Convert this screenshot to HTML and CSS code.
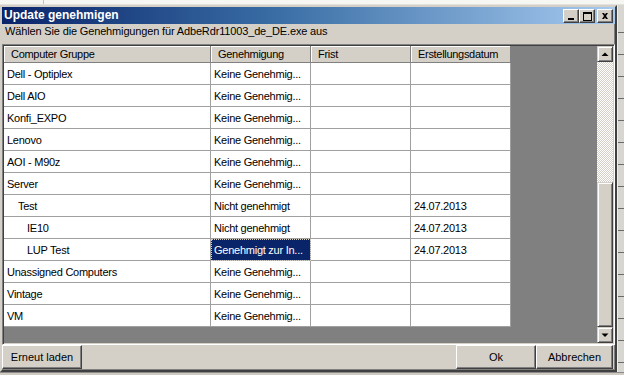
FILE: index.html
```html
<!DOCTYPE html>
<html lang="de">
<head>
<meta charset="utf-8">
<title>Update genehmigen</title>
<link rel="stylesheet" href="styles.css">
</head>
<body>
<div class="screen">
  <div class="topstrip"><span class="tick"></span></div>
  <div class="main">
    <div class="window">
      <div class="titlebar">
        <span class="title">Update genehmigen</span>
        <div class="tbtns">
          <span class="tbtn"><svg width="14" height="12" viewBox="0 0 14 12"><rect x="4" y="8" width="6" height="2" fill="#000"/></svg></span>
          <span class="tbtn gap"><svg width="14" height="12" viewBox="0 0 14 12"><path d="M3 2h9v9H3z M4 4v6h7V4z" fill="#000" fill-rule="evenodd"/></svg></span>
          <span class="tbtn"><svg width="14" height="12" viewBox="0 0 14 12"><path d="M4 3h2l1 1.5L8 3h2L8 6l2 3H8L7 7.5 6 9H4l2-3z" fill="#000"/></svg></span>
        </div>
      </div>
      <div class="subtitle">Wählen Sie die Genehmigungen für AdbeRdr11003_de_DE.exe aus</div>
      <div class="listbox">
        <div class="gridarea">
          <div class="row head">
            <div class="c c1 h">Computer Gruppe</div>
            <div class="c c2 h">Genehmigung</div>
            <div class="c c3 h">Frist</div>
            <div class="c c4 h">Erstellungsdatum</div>
          </div>
          <div class="row"><div class="c c1">Dell - Optiplex</div><div class="c c2">Keine Genehmig...</div><div class="c c3"></div><div class="c c4"></div></div>
          <div class="row"><div class="c c1">Dell AIO</div><div class="c c2">Keine Genehmig...</div><div class="c c3"></div><div class="c c4"></div></div>
          <div class="row"><div class="c c1">Konfi_EXPO</div><div class="c c2">Keine Genehmig...</div><div class="c c3"></div><div class="c c4"></div></div>
          <div class="row"><div class="c c1">Lenovo</div><div class="c c2">Keine Genehmig...</div><div class="c c3"></div><div class="c c4"></div></div>
          <div class="row"><div class="c c1">AOI - M90z</div><div class="c c2">Keine Genehmig...</div><div class="c c3"></div><div class="c c4"></div></div>
          <div class="row"><div class="c c1">Server</div><div class="c c2">Keine Genehmig...</div><div class="c c3"></div><div class="c c4"></div></div>
          <div class="row"><div class="c c1 l1">Test</div><div class="c c2">Nicht genehmigt</div><div class="c c3"></div><div class="c c4">24.07.2013</div></div>
          <div class="row"><div class="c c1 l2">IE10</div><div class="c c2">Nicht genehmigt</div><div class="c c3"></div><div class="c c4">24.07.2013</div></div>
          <div class="row"><div class="c c1 l2">LUP Test</div><div class="c c2 sel">Genehmigt zur In...</div><div class="c c3"></div><div class="c c4">24.07.2013</div></div>
          <div class="row"><div class="c c1">Unassigned Computers</div><div class="c c2">Keine Genehmig...</div><div class="c c3"></div><div class="c c4"></div></div>
          <div class="row"><div class="c c1">Vintage</div><div class="c c2">Keine Genehmig...</div><div class="c c3"></div><div class="c c4"></div></div>
          <div class="row"><div class="c c1">VM</div><div class="c c2">Keine Genehmig...</div><div class="c c3"></div><div class="c c4"></div></div>
        </div>
        <div class="vscroll">
          <span class="sbtn"><svg width="14" height="14" viewBox="0 0 14 14"><path d="M3.5 9h7L7 5.5z" fill="#000"/></svg></span>
          <span class="track"></span>
          <span class="thumb"></span>
          <span class="sbtn"><svg width="14" height="14" viewBox="0 0 14 14"><path d="M3.5 5.5h7L7 9z" fill="#000"/></svg></span>
        </div>
      </div>
      <div class="buttons">
        <span class="btn reload">Erneut laden</span>
        <div class="rightbtns">
          <span class="btn ok">Ok</span>
          <span class="btn cancel">Abbrechen</span>
        </div>
      </div>
    </div>
    <div class="behind"></div>
  </div>
  <div class="bottomstrip"></div>
</div>
</body>
</html>
```
FILE: styles.css
```css
* { box-sizing: border-box; }
html, body { margin: 0; padding: 0; }
body {
  width: 624px;
  height: 375px;
  overflow: hidden;
  background: #d4d0c8;
  font-family: "Liberation Sans", Arial, sans-serif;
  font-size: 11px;
  color: #000;
}
.screen { display: flex; flex-direction: column; width: 624px; height: 375px; }
.topstrip {
  height: 5px;
  flex: none;
  background: #f6f6f2;
  border-bottom: 1px solid #e4e2dc;
  display: flex;
  padding-left: 43px;
}
.tick { width: 1px; height: 4px; background: #d6c58a; }
.main { display: flex; height: 367px; flex: none; }
.window {
  width: 617px;
  height: 367px;
  background: #d4d0c8;
  border: 2px solid;
  border-color: #d4d0c8 #404040 #404040 #d4d0c8;
  box-shadow: inset -1px -1px #808080;
  display: flex;
  flex-direction: column;
}
.titlebar {
  height: 17px;
  flex: none;
  background: linear-gradient(to right, #0a246a 0%, #3a6ea5 45%, #a6caf0 100%);
  display: flex;
  align-items: center;
  justify-content: space-between;
  padding: 0 2px 0 2px;
}
.title { color: #fff; font-weight: bold; font-size: 12px; line-height: 17px; }
.tbtns { display: flex; align-items: center; }
.tbtn {
  width: 16px; height: 14px;
  background: #d4d0c8;
  border: 1px solid;
  border-color: #fff #404040 #404040 #fff;
  box-shadow: inset -1px -1px #808080;
  display: flex; align-items: center; justify-content: center;
}
.tbtn svg { display: block; }
.tbtn.gap { margin-right: 2px; }
.subtitle {
  height: 20px; flex: none;
  line-height: 15px;
  padding-left: 3px;
  white-space: nowrap;
  letter-spacing: -0.15px;
}
.listbox {
  height: 301px;
  flex: none;
  display: flex;
  border: 1px solid;
  border-color: #808080 #fff #fff #808080;
  box-shadow: inset 1px 1px #404040, inset -1px -1px #d4d0c8;
  padding: 1px;
}
.gridarea { flex: 1; background: #808080; display: flex; flex-direction: column; }
.row { display: flex; height: 22px; flex: none; }
.row.head { height: 17px; }
.c {
  background: #fff;
  border-right: 1px solid #a0a0a0;
  border-bottom: 1px solid #a0a0a0;
  padding: 1px 0 0 3px;
  line-height: 20px;
  white-space: nowrap;
  overflow: hidden;
  letter-spacing: -0.25px;
}
.c1 { width: 207px; }
.c2 { width: 100px; }
.c3 { width: 100px; }
.c4 { width: 100px; }
.c.h {
  background: #d4d0c8;
  border-right: 1px solid #808080;
  border-bottom: 1px solid #808080;
  box-shadow: inset 1px 1px #fff;
  padding: 1px 0 0 7px;
  line-height: 15px;
  letter-spacing: -0.3px;
}
.c1.l1 { padding-left: 14px; }
.c1.l2 { padding-left: 23px; }
.c.sel {
  background: #0a246a;
  color: #fff;
  outline: 1px dotted #d4d0c8;
  outline-offset: -1px;
}
.vscroll { width: 16px; flex: none; display: flex; flex-direction: column; }
.sbtn {
  height: 16px; flex: none;
  background: #d4d0c8;
  border: 1px solid;
  border-color: #d4d0c8 #404040 #404040 #d4d0c8;
  box-shadow: inset 1px 1px #fff, inset -1px -1px #808080;
  display: flex; align-items: center; justify-content: center;
}
.sbtn svg { display: block; }
.track {
  height: 120px; flex: none;
  background: repeating-conic-gradient(#fff 0 25%, #d4d0c8 0 50%) 0 0 / 2px 2px;
}
.thumb {
  height: 145px; flex: none;
  background: #d4d0c8;
  border: 1px solid;
  border-color: #d4d0c8 #404040 #404040 #d4d0c8;
  box-shadow: inset 1px 1px #fff, inset -1px -1px #808080;
}
.buttons { height: 25px; flex: none; display: flex; justify-content: space-between; }
.rightbtns { display: flex; margin-right: 2px; }
.btn {
  height: 24px;
  background: #d4d0c8;
  border: 1px solid;
  border-color: #fff #404040 #404040 #fff;
  box-shadow: inset -1px -1px #808080;
  display: flex; align-items: center; justify-content: center;
  line-height: 22px;
}
.reload { width: 80px; }
.ok { width: 80px; }
.cancel { width: 77px; }
.behind {
  flex: 1;
  background:
    repeating-linear-gradient(to bottom, transparent 0 21px, #6a6a6a 21px 22px),
    #d8d6d0;
  background-position: 0 6px;
  border-left: 1px solid #eeeeea;
}
.bottomstrip { flex: 1; background: #cfcbc3; border-top: 1px solid #8a8a8a; }
```
